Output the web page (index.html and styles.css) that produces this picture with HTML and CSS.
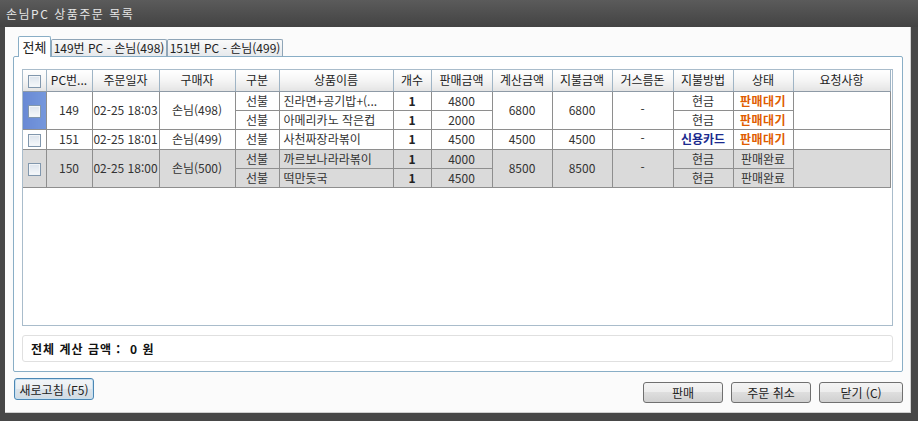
FILE: index.html
```html
<!DOCTYPE html>
<html lang="ko">
<head>
<meta charset="utf-8">
<title>손님PC 상품주문 목록</title>
<link rel="stylesheet" href="styles.css">
</head>
<body>
<div class="window">
  <div class="titlebar">손님PC 상품주문 목록</div>
  <div class="client">
    <div class="tabs">
      <div class="tab active t1">전체</div>
      <div class="tab t2">149번 PC - 손님(498)</div>
      <div class="tab t3">151번 PC - 손님(499)</div>
    </div>
    <div class="panel">
      <div class="grid">
        <table>
          <colgroup>
            <col class="c-cb"><col class="c-pc"><col class="c-date"><col class="c-buyer"><col class="c-kind">
            <col class="c-name"><col class="c-qty"><col class="c-price"><col class="c-calc"><col class="c-pay">
            <col class="c-change"><col class="c-method"><col class="c-state"><col class="c-req">
          </colgroup>
          <thead>
            <tr>
              <th class="first"><span class="cb"></span></th>
              <th>PC번...</th>
              <th>주문일자</th>
              <th>구매자</th>
              <th>구분</th>
              <th>상품이름</th>
              <th>개수</th>
              <th>판매금액</th>
              <th>계산금액</th>
              <th>지불금액</th>
              <th>거스름돈</th>
              <th>지불방법</th>
              <th>상태</th>
              <th>요청사항</th>
            </tr>
          </thead>
          <tbody>
            <tr>
              <td class="first sel" rowspan="2"><span class="cb"></span></td>
              <td rowspan="2">149</td>
              <td rowspan="2">02-25 18:03</td>
              <td rowspan="2">손님(498)</td>
              <td>선불</td>
              <td class="name">진라면+공기밥+(...</td>
              <td class="b">1</td>
              <td>4800</td>
              <td rowspan="2">6800</td>
              <td rowspan="2">6800</td>
              <td rowspan="2" class="dash">-</td>
              <td>현금</td>
              <td class="wait">판매대기</td>
              <td rowspan="2"></td>
            </tr>
            <tr>
              <td>선불</td>
              <td class="name">아메리카노 작은컵</td>
              <td class="b">1</td>
              <td>2000</td>
              <td>현금</td>
              <td class="wait">판매대기</td>
            </tr>
            <tr>
              <td class="first"><span class="cb"></span></td>
              <td>151</td>
              <td>02-25 18:01</td>
              <td>손님(499)</td>
              <td>선불</td>
              <td class="name">사천짜장라볶이</td>
              <td class="b">1</td>
              <td>4500</td>
              <td>4500</td>
              <td>4500</td>
              <td class="dash">-</td>
              <td class="card">신용카드</td>
              <td class="wait">판매대기</td>
              <td></td>
            </tr>
            <tr class="gray">
              <td class="first" rowspan="2"><span class="cb"></span></td>
              <td rowspan="2">150</td>
              <td rowspan="2">02-25 18:00</td>
              <td rowspan="2">손님(500)</td>
              <td>선불</td>
              <td class="name">까르보나라라볶이</td>
              <td class="b">1</td>
              <td>4000</td>
              <td rowspan="2">8500</td>
              <td rowspan="2">8500</td>
              <td rowspan="2" class="dash">-</td>
              <td>현금</td>
              <td>판매완료</td>
              <td rowspan="2"></td>
            </tr>
            <tr class="gray">
              <td>선불</td>
              <td class="name">떡만둣국</td>
              <td class="b">1</td>
              <td>4500</td>
              <td>현금</td>
              <td>판매완료</td>
            </tr>
          </tbody>
        </table>
      </div>
      <div class="summary">전체 계산 금액 :&nbsp;&nbsp;0 원</div>
    </div>
    <div class="footer">
      <button class="btn focus">새로고침 (F5)</button>
      <div class="actions">
        <button class="btn">판매</button>
        <button class="btn">주문 취소</button>
        <button class="btn wide">닫기 (C)</button>
      </div>
    </div>
  </div>
</div>
</body>
</html>
```
FILE: styles.css
```css
* { box-sizing: border-box; }
html, body { margin: 0; padding: 0; }
body {
  width: 918px;
  height: 421px;
  overflow: hidden;
  background: #474747;
  font-family: "Noto Sans CJK KR", "Noto Sans", sans-serif;
  font-size: 12px;
  color: #333;
}
.window {
  display: flex;
  flex-direction: column;
  height: 421px;
}
.titlebar {
  height: 27px;
  padding-left: 6px;
  display: flex;
  align-items: center;
  color: #e6e6e6;
  letter-spacing: 1.5px;
  background: linear-gradient(#5b5b5b, #434343);
}
.client {
  flex: 1;
  margin: 0 7px 8px 5px;
  background: #fbfbfb;
  border-right: 1px solid #cfcfcf;
  border-bottom: 1px solid #cfcfcf;
  padding: 9px 7px 0 8px;
  display: flex;
  flex-direction: column;
}
.tabs {
  display: flex;
  align-items: flex-end;
  height: 21px;
  margin-bottom: -1px;
  padding-left: 5px;
  position: relative;
  z-index: 1;
}
.tab {
  height: 18px;
  border: 1px solid #8fa5b7;
  border-bottom-color: #89aec6;
  border-radius: 2px 2px 0 0;
  background: linear-gradient(#fafafa, #e6e9ec);
  color: #222;
  font-size: 12px;
  line-height: 15px;
  text-align: center;
  white-space: nowrap;
}
.tab.active {
  height: 21px;
  background: #fff;
  border-color: #89aec6;
  border-bottom: none;
  line-height: 18px;
  padding-top: 1px;
  font-size: 13px;
}
.t1 { width: 33px; }
.t2 { width: 116px; }
.t3 { width: 116px; }
.panel {
  height: 316px;
  border: 1px solid #89aec6;
  border-radius: 2px;
  background: #fff;
  padding: 12px 9px 8px 8px;
  display: flex;
  flex-direction: column;
}
.grid {
  height: 257px;
  border: 1px solid #a9bccb;
  background: #fff;
  overflow: hidden;
}
table {
  border-collapse: collapse;
  table-layout: fixed;
  width: 867px;
}
.c-cb { width: 23px; }
.c-pc { width: 46px; }
.c-date { width: 67px; }
.c-buyer { width: 76px; }
.c-kind { width: 44px; }
.c-name { width: 114px; }
.c-qty { width: 38px; }
.c-price { width: 61px; }
.c-calc { width: 60px; }
.c-pay { width: 60px; }
.c-change { width: 61px; }
.c-method { width: 60px; }
.c-state { width: 60px; }
.c-req { width: 97px; }
th {
  height: 21px;
  padding: 0;
  font-weight: normal;
  color: #222;
  line-height: 16px;
  white-space: nowrap;
  overflow: hidden;
  background: linear-gradient(#ffffff, #f5f5f5 50%, #e4e4e4);
  border-right: 1px solid #9fb4c5;
  border-bottom: 1px solid #8e9aa6;
}
td {
  height: 19px;
  padding: 0;
  text-align: center;
  line-height: 16px;
  white-space: nowrap;
  overflow: hidden;
  border: 1px solid #8e8e8e;
  color: #333;
}
.first { border-left: none; }
td.name { text-align: left; padding-left: 4px; }
td.b { font-weight: bold; color: #222; }
td.dash { padding-bottom: 3px; }
tr.gray td { background: #dadada; }
td.sel { background: linear-gradient(90deg, #6889d4, #7597dc); }
.cb {
  display: inline-block;
  width: 13px;
  height: 13px;
  vertical-align: middle;
  border: 1px solid #8197ad;
  background: linear-gradient(#dbe3ec, #f7f9fb);
  box-shadow: inset 0 0 0 1px #f2f5f8;
}
.wait { color: #e05c00; font-weight: bold; letter-spacing: 0.5px; }
.card { color: #1b2a8e; font-weight: bold; }
.summary {
  margin-top: 9px;
  height: 27px;
  border: 1px solid #e0e0e0;
  border-radius: 3px;
  padding-left: 8px;
  display: flex;
  align-items: center;
  font-weight: bold;
  letter-spacing: 1px;
  color: #111;
}
.footer {
  display: flex;
  justify-content: space-between;
  align-items: flex-start;
  margin-top: 6px;
  padding-left: 1px;
}
.actions {
  display: flex;
  gap: 8px;
  margin-top: 4px;
}
.btn {
  width: 80px;
  height: 21px;
  padding: 0;
  border: 1px solid #707070;
  border-radius: 3px;
  background: linear-gradient(#f4f4f4, #ececec 50%, #dedede 50%, #d0d0d0);
  font-family: inherit;
  font-size: 12px;
  color: #222;
  line-height: 17px;
}
.btn.wide { width: 84px; }
.btn.focus {
  height: 22px;
  border-color: #4c87b4;
  background: linear-gradient(#f2f5f8, #e9eef2 50%, #dbe3ea 50%, #d2dbe3);
  box-shadow: inset 0 0 0 1px #c8e0f0;
}
```
